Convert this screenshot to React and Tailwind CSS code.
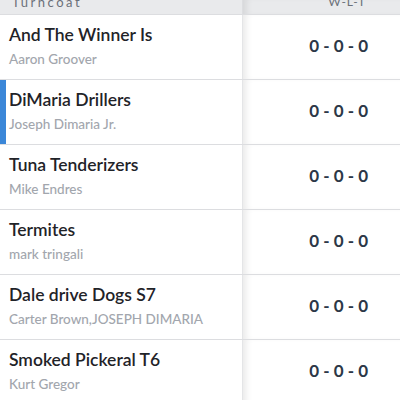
import React from 'react'

const teams = [
  { name: 'And The Winner Is', owner: 'Aaron Groover' },
  { name: 'DiMaria Drillers', owner: 'Joseph Dimaria Jr.', mine: true },
  { name: 'Tuna Tenderizers', owner: 'Mike Endres' },
  { name: 'Termites', owner: 'mark tringali' },
  { name: 'Dale drive Dogs S7', owner: 'Carter Brown,JOSEPH DIMARIA' },
  { name: 'Smoked Pickeral T6', owner: 'Kurt Gregor' },
]

const App = () => {
  return (
    <div className="w-[400px] h-[400px] overflow-hidden bg-white font-['Lato','Open_Sans',sans-serif]">
      {/* Header */}
      <div className="flex h-[14px] bg-[#e9eaec] overflow-hidden">
        <div className="w-[242px] pl-[12px] text-[13px] leading-[14px] -mt-[5px] tracking-[2.5px] text-[#6b7079]">
          Turncoat
        </div>
        <div className="flex-1 flex justify-end pr-[34px] border-l border-[#dcdde0] shadow-[inset_7px_0_7px_-4px_rgba(0,0,0,0.09)]">
          <span className="text-[12px] leading-[14px] -mt-[5px] tracking-[1px] text-[#6b7079]">W-L-T</span>
        </div>
      </div>

      {/* Rows */}
      {teams.map((team) => (
        <div key={team.name} className="flex h-[65px] border-t border-[#dcdde0]">
          <div className="relative w-[242px] pl-[9px] flex flex-col justify-center">
            {team.mine && <div className="absolute left-0 top-0 bottom-0 w-[6px] bg-[#3b87d8]" />}
            <div className="text-[17.5px] leading-[20px] font-semibold text-[#1f2328] -mt-[2px]">{team.name}</div>
            <div className="text-[13.5px] leading-[16px] font-medium text-[#a2a6ad] mt-[6px]">{team.owner}</div>
          </div>
          <div className="flex-1 flex items-center justify-end pr-[32px] border-l border-[#e4e5e7] shadow-[inset_7px_0_7px_-4px_rgba(0,0,0,0.09)]">
            <span className="text-[17px] font-bold text-[#2c3747] -mt-[2px]">0 - 0 - 0</span>
          </div>
        </div>
      ))}
    </div>
  )
}

export default App
